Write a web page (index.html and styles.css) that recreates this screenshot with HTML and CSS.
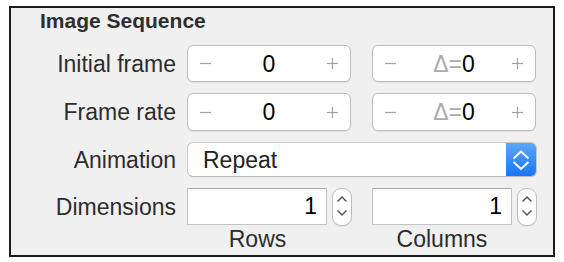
FILE: index.html
```html
<!DOCTYPE html>
<html>
<head>
<meta charset="utf-8">
<link rel="stylesheet" href="styles.css">
</head>
<body>
<div class="panel">
  <div class="title">Image Sequence</div>
  <div class="form">
    <div class="label">Initial frame</div>
    <div class="pair">
      <div class="stepper">
        <svg class="op" width="11" height="11" viewBox="0 0 11 11"><line x1="0" y1="5.5" x2="11" y2="5.5"/></svg>
        <span class="val">0</span>
        <svg class="op" width="11" height="11" viewBox="0 0 11 11"><line x1="0" y1="5.5" x2="11" y2="5.5"/><line x1="5.5" y1="0" x2="5.5" y2="11"/></svg>
      </div>
      <div class="stepper">
        <svg class="op" width="11" height="11" viewBox="0 0 11 11"><line x1="0" y1="5.5" x2="11" y2="5.5"/></svg>
        <span class="val"><span class="delta">Δ=</span>0</span>
        <svg class="op" width="11" height="11" viewBox="0 0 11 11"><line x1="0" y1="5.5" x2="11" y2="5.5"/><line x1="5.5" y1="0" x2="5.5" y2="11"/></svg>
      </div>
    </div>

    <div class="label">Frame rate</div>
    <div class="pair">
      <div class="stepper">
        <svg class="op" width="11" height="11" viewBox="0 0 11 11"><line x1="0" y1="5.5" x2="11" y2="5.5"/></svg>
        <span class="val">0</span>
        <svg class="op" width="11" height="11" viewBox="0 0 11 11"><line x1="0" y1="5.5" x2="11" y2="5.5"/><line x1="5.5" y1="0" x2="5.5" y2="11"/></svg>
      </div>
      <div class="stepper">
        <svg class="op" width="11" height="11" viewBox="0 0 11 11"><line x1="0" y1="5.5" x2="11" y2="5.5"/></svg>
        <span class="val"><span class="delta">Δ=</span>0</span>
        <svg class="op" width="11" height="11" viewBox="0 0 11 11"><line x1="0" y1="5.5" x2="11" y2="5.5"/><line x1="5.5" y1="0" x2="5.5" y2="11"/></svg>
      </div>
    </div>

    <div class="label">Animation</div>
    <div class="popup">
      <span class="popup-text">Repeat</span>
      <span class="popup-btn">
        <svg width="30" height="35" viewBox="0 0 30 35"><polyline points="7.5,16.5 15,9.5 22.5,16.5"/><polyline points="7.5,20 15,27 22.5,20"/></svg>
      </span>
    </div>

    <div class="label label-top">Dimensions</div>
    <div class="pair">
      <div class="dim-col">
        <div class="dim">
          <div class="field">1</div>
          <div class="mini">
            <svg width="20" height="36" viewBox="0 0 20 36"><polyline points="5,12 10,7 15,12"/><polyline points="5,22 10,27 15,22"/></svg>
          </div>
        </div>
        <div class="caption">Rows</div>
      </div>
      <div class="dim-col">
        <div class="dim">
          <div class="field field-narrow">1</div>
          <div class="mini">
            <svg width="20" height="36" viewBox="0 0 20 36"><polyline points="5,12 10,7 15,12"/><polyline points="5,22 10,27 15,22"/></svg>
          </div>
        </div>
        <div class="caption caption-narrow">Columns</div>
      </div>
    </div>
  </div>
</div>
</body>
</html>
```

FILE: styles.css
```css
html, body {
  margin: 0;
  padding: 0;
  background: #ffffff;
}

body {
  font-family: "Liberation Sans", Arial, sans-serif;
}

.panel {
  box-sizing: border-box;
  width: 546px;
  height: 251px;
  margin: 6px 0 0 9px;
  border: 2px solid #1c1c1c;
  background: #f0f0f0;
  padding-top: 1px;
}

.title {
  font-size: 21px;
  font-weight: bold;
  line-height: 24px;
  color: #2e2e2e;
  padding-left: 29px;
}

.form {
  margin-top: 12px;
  display: grid;
  grid-template-columns: 165px 350px;
  grid-template-rows: 37px 38px 35px auto;
  column-gap: 11px;
  row-gap: 11px;
}

.label {
  font-size: 23px;
  line-height: 26px;
  color: #2d2d2d;
  text-align: right;
  align-self: center;
}

.label-top {
  align-self: start;
  margin-top: 6px;
}

.pair {
  display: grid;
  grid-template-columns: 165px 165px;
  column-gap: 20px;
}

.stepper {
  box-sizing: border-box;
  width: 164px;
  height: 100%;
  background: #ffffff;
  border: 1px solid #bdbdbd;
  border-radius: 6px;
  box-shadow: 0 1px 0 rgba(0, 0, 0, 0.06);
  display: flex;
  align-items: center;
  padding: 0 12px;
}

.op {
  flex: none;
  stroke: #a3a3a3;
  stroke-width: 1.2;
}

.val {
  flex: 1;
  text-align: center;
  font-size: 23px;
  line-height: 26px;
  color: #000000;
}

.delta {
  color: #ababab;
}

.popup {
  box-sizing: border-box;
  height: 100%;
  background: #ffffff;
  border: 1px solid #c9c9c9;
  border-bottom-color: #b9b9b9;
  border-radius: 6px;
  display: flex;
  align-items: stretch;
  overflow: hidden;
}

.popup-text {
  flex: 1;
  align-self: center;
  font-size: 23px;
  line-height: 26px;
  color: #222222;
  padding-left: 15px;
}

.popup-btn {
  width: 30px;
  background: linear-gradient(#5aa7fb, #1a75f6);
  display: flex;
  align-items: center;
  justify-content: center;
}

.popup-btn svg {
  fill: none;
  stroke: #ffffff;
  stroke-width: 2;
}

.dim-col {
  display: flex;
  flex-direction: column;
}

.dim {
  display: flex;
  align-items: flex-start;
  gap: 5px;
}

.field {
  box-sizing: border-box;
  width: 141px;
  height: 37px;
  background: #ffffff;
  border: 1px solid #c3c3c3;
  border-top-color: #a9a9a9;
  text-align: right;
  padding-right: 9px;
  font-size: 23px;
  line-height: 35px;
  color: #000000;
}

.field-narrow {
  width: 140px;
}

.mini {
  box-sizing: border-box;
  width: 20px;
  height: 38px;
  background: #ffffff;
  border: 1px solid #bdbdbd;
  border-radius: 9px;
  box-shadow: 0 1px 0 rgba(0, 0, 0, 0.06);
  display: flex;
  align-items: center;
  justify-content: center;
}

.mini svg {
  fill: none;
  stroke: #555555;
  stroke-width: 1.6;
}

.caption {
  width: 141px;
  text-align: center;
  font-size: 23px;
  line-height: 26px;
  color: #2d2d2d;
}

.caption-narrow {
  width: 140px;
}
```
